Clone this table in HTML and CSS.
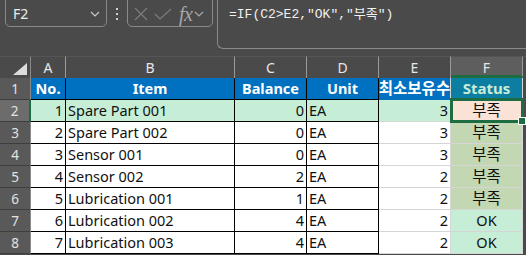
FILE: index.html
```html
<!DOCTYPE html>
<html>
<head>
<meta charset="utf-8">
<link rel="stylesheet" href="styles.css">
</head>
<body>
<div class="app">
  <div class="fbar">
    <div class="namebox">
      <span class="nb-text">F2</span>
      <svg class="chev" width="10" height="6" viewBox="0 0 10 6"><path d="M1 1 L5 5 L9 1" fill="none" stroke="#c8c8c8" stroke-width="1.2"/></svg>
    </div>
    <div class="dots"><i></i><i></i><i></i></div>
    <div class="fxbox">
      <svg width="16" height="14" viewBox="0 0 16 14"><path d="M2 1 L14 13 M14 1 L2 13" stroke="#7c7c7c" stroke-width="1.2" fill="none"/></svg>
      <svg width="18" height="12" viewBox="0 0 18 12"><path d="M1 6 L6 11 L17 1" stroke="#7c7c7c" stroke-width="1.2" fill="none"/></svg>
      <span class="fx">fx</span>
      <svg class="chev2" width="10" height="6" viewBox="0 0 10 6"><path d="M1 1 L5 5 L9 1" fill="none" stroke="#a8a8a8" stroke-width="1.2"/></svg>
    </div>
    <div class="formula">=IF(C2&gt;E2,"OK","부족")</div>
  </div>
  <div class="sheet">
    <div class="ch corner"><span class="tri"></span></div>
    <div class="ch">A</div><div class="ch">B</div><div class="ch">C</div><div class="ch">D</div><div class="ch">E</div><div class="ch sel">F</div><div class="ch fill"></div>

    <div class="rh">1</div>
    <div class="c hd b">No.</div><div class="c hd b">Item</div><div class="c hd b">Balance</div><div class="c hd b">Unit</div><div class="c hd e clip ko">최소보유수</div><div class="c hs">Status</div><div class="fillc"></div>

    <div class="rh cur">2</div>
    <div class="c b g r">1</div><div class="c b g l">Spare Part 001</div><div class="c b g r">0</div><div class="c b g l">EA</div><div class="c e g r">3</div><div class="c f active ko">부족</div><div class="fillc"></div>

    <div class="rh">3</div>
    <div class="c b r">2</div><div class="c b l">Spare Part 002</div><div class="c b r">0</div><div class="c b l">EA</div><div class="c e r">3</div><div class="c f olive ko">부족</div><div class="fillc"></div>

    <div class="rh">4</div>
    <div class="c b r">3</div><div class="c b l">Sensor 001</div><div class="c b r">0</div><div class="c b l">EA</div><div class="c e r">3</div><div class="c f olive ko">부족</div><div class="fillc"></div>

    <div class="rh">5</div>
    <div class="c b r">4</div><div class="c b l">Sensor 002</div><div class="c b r">2</div><div class="c b l">EA</div><div class="c e r">2</div><div class="c f olive ko">부족</div><div class="fillc"></div>

    <div class="rh">6</div>
    <div class="c b r">5</div><div class="c b l">Lubrication 001</div><div class="c b r">1</div><div class="c b l">EA</div><div class="c e r">2</div><div class="c f olive ko">부족</div><div class="fillc"></div>

    <div class="rh">7</div>
    <div class="c b r">6</div><div class="c b l">Lubrication 002</div><div class="c b r">4</div><div class="c b l">EA</div><div class="c e r">2</div><div class="c f ok">OK</div><div class="fillc"></div>

    <div class="rh">8</div>
    <div class="c b r">7</div><div class="c b l">Lubrication 003</div><div class="c b r">4</div><div class="c b l">EA</div><div class="c e r">2</div><div class="c f ok">OK</div><div class="fillc"></div>
  </div>
</div>
</body>
</html>
```
FILE: styles.css
```css
* { box-sizing: border-box; }
html, body { margin: 0; padding: 0; background: #4a4a4a; }
body { width: 526px; height: 255px; overflow: hidden; font-family: "Noto Sans", "Noto Sans CJK KR", sans-serif; }
.app { width: 526px; }

.fbar { height: 56px; display: flex; align-items: flex-start; }
.namebox {
  margin-left: 5px; margin-top: -6px; width: 102px; height: 33px;
  border: 1px solid #8a8a8a; border-radius: 5px;
  display: flex; align-items: center; justify-content: space-between;
  padding: 6px 6px 0 7px; color: #ececec; font-size: 14px;
}
.dots { width: 20px; display: flex; flex-direction: column; align-items: center; gap: 3px; padding-top: 8px; }
.dots i { width: 2px; height: 2px; background: #cfcfcf; display: block; }
.fxbox {
  margin-top: -6px; width: 86px; height: 33px;
  border: 1px solid #8a8a8a; border-radius: 5px;
  display: flex; align-items: center; gap: 5px; padding: 6px 3px 0 5px;
}
.fx { font-family: "Liberation Serif", serif; font-style: italic; font-size: 20px; color: #a8a8a8; margin-left: 2px; letter-spacing: -0.5px; line-height: 20px; }
.chev2 { margin-left: -3px; }
.formula {
  margin-left: 4px; margin-top: -6px; flex: 1; height: 55px;
  border: 1px solid #8a8a8a; border-right: none; border-radius: 6px 0 0 6px;
  padding: 8px 0 0 11px; color: #f0f0f0;
  font-family: "Liberation Mono", "Noto Sans CJK KR", monospace; font-size: 13px;
}

.sheet {
  display: grid;
  grid-template-columns: 31px 35px 169px 72px 72px 72px 72px 1fr;
  grid-auto-rows: 22px;
}
.ch {
  background: #4a4a4a; color: #e6e6e6; font-size: 14px;
  display: flex; align-items: center; justify-content: center;
  border-right: 1px solid #9a9a9a; border-top: 1px solid #555;
}
.ch.corner { position: relative; border-right: 1px solid #8a8a8a; }
.tri { position: absolute; right: 3px; bottom: 3px; width: 0; height: 0; border-left: 14px solid transparent; border-bottom: 12px solid #dcdcdc; }
.ch.sel { background: #5e5e5e; border-bottom: 3px solid #1e6d42; padding-top: 2px; }
.ch.fill { border-right: none; }
.rh {
  background: #595959; color: #e2e2e2; font-size: 13.5px;
  display: flex; align-items: center; justify-content: center;
  border-bottom: 1px solid #3e3e3e; border-right: 1px solid #8a8a8a;
}
.rh.cur { background: #6c6c6c; border-right: 2px solid #1e6d42; }
.fillc { background: #4a4a4a; }

.c {
  background: #fff; color: #111; font-size: 14.5px; line-height: 21px;
  border-right: 1px solid #d6d6d6; border-bottom: 1px solid #d6d6d6;
  white-space: nowrap; overflow: hidden; padding: 0 2px;
}
.c.ko { font-size: 15.5px; }
.c.b { border-right-color: #000; border-bottom-color: #000; }
.c.r { text-align: right; }
.c.l { text-align: left; }
.c.hd { background: #0070c0; color: #fff; font-weight: 700; text-align: center; }
.c.hd.e { border-bottom-color: #0070c0; }
.clip { padding: 0; display: flex; justify-content: center; }
.c.hs { background: #0c7ea2; color: #c9ecd7; font-weight: 700; text-align: center; font-size: 15px; }
.c.g { background: #c6eed6; }
.c.f { text-align: center; }
.c.olive { background: #c4d7b3; }
.c.ok { background: #c6eed6; }
.c.active { background: #fbe2d6; position: relative; overflow: visible; }
.c.active::after {
  content: ""; position: absolute; left: -1px; top: -2px; right: -2px; bottom: -2px;
  border: 3px solid #1e6d42;
}
.c.active::before {
  content: ""; position: absolute; right: -4px; bottom: -4px; width: 6px; height: 6px;
  background: #1e6d42; border: 1px solid #fff; z-index: 2;
}
```
